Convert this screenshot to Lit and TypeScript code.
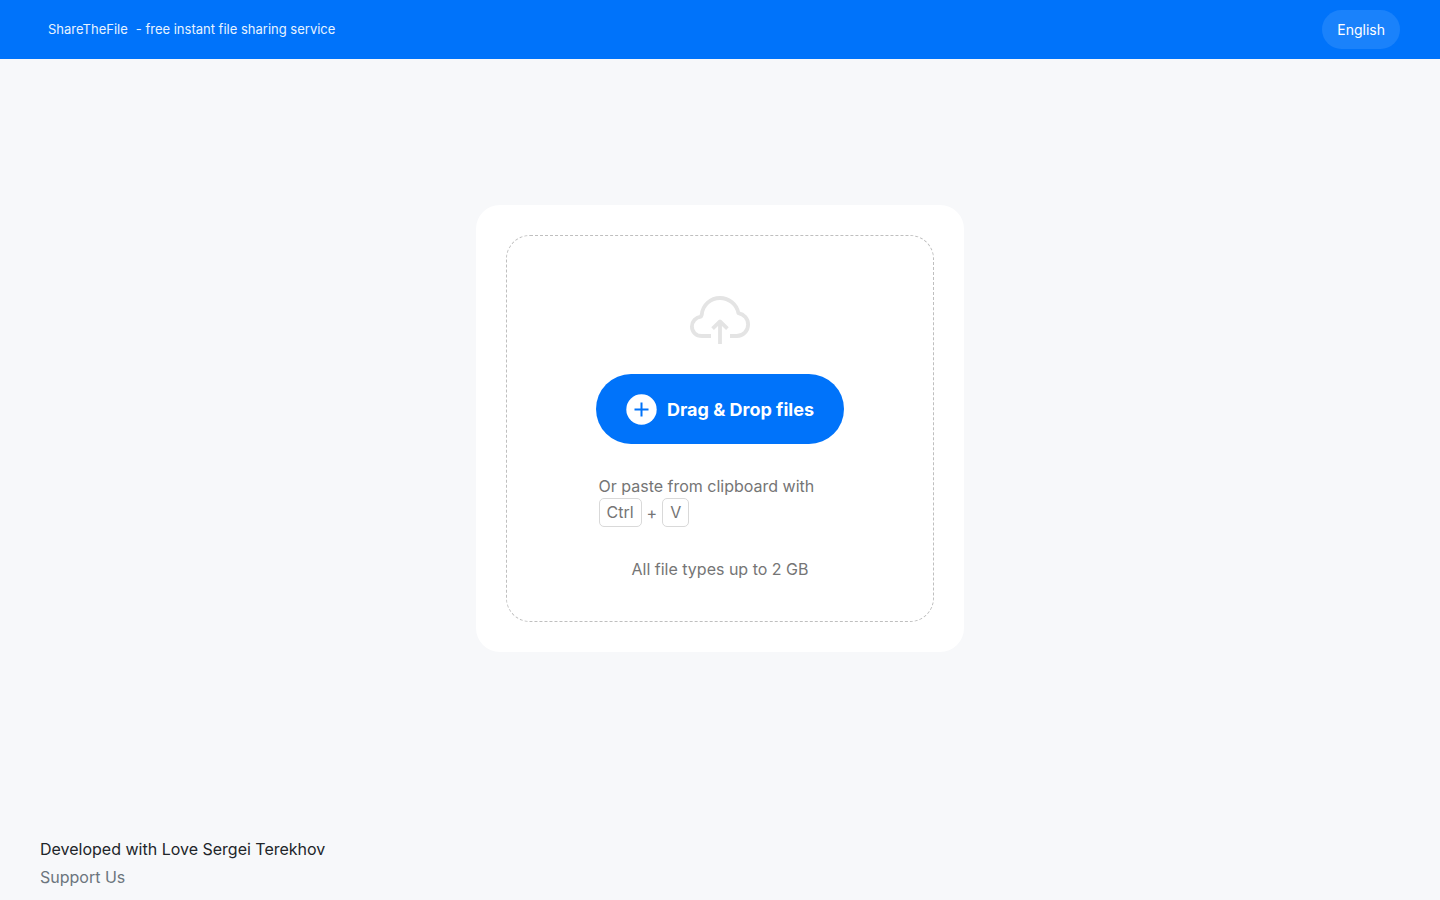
import { LitElement, html, css } from "lit";
import { customElement } from "lit/decorators.js";

@customElement("app-root")
export class AppRoot extends LitElement {
  static styles = css`
    :host {
      display: flex;
      flex-direction: column;
      min-height: 100vh;
      background: #f7f8fa;
      color: #212529;
      font-family: Inter, "Liberation Sans", sans-serif;
      font-size: 16px;
      line-height: 24px;
    }
    .header {
      display: flex;
      align-items: center;
      justify-content: space-between;
      padding: 10px 40px;
      background: #0073fa;
    }
    .brand {
      display: flex;
      gap: 8px;
      margin: 0;
      padding: 0 8px;
      color: #e6f2ff;
      font-size: 13px;
      line-height: 21px;
    }
    .brand a {
      color: inherit;
      text-decoration: none;
    }
    .language {
      padding: 9px 15px;
      border: 0;
      border-radius: 20px;
      background: #1a82fb;
      color: #fff;
      font: 400 14px/21px Inter, "Liberation Sans", sans-serif;
      cursor: pointer;
    }
    .main {
      flex: 1;
      display: flex;
      align-items: center;
      justify-content: center;
      padding: 30px;
    }
    .card {
      box-sizing: border-box;
      width: 100%;
      max-width: 488px;
      padding: 30px;
      border-radius: 24px;
      background: #fff;
    }
    .dropzone {
      display: flex;
      flex-direction: column;
      align-items: center;
      gap: 30px;
      padding: 60px 30px 40px;
      border: 1px dashed #bfbfbf;
      border-radius: 24px;
      color: #757575;
    }
    .cloud {
      display: block;
      width: 60px;
      height: 48px;
    }
    .upload {
      display: flex;
      align-items: center;
      gap: 10px;
      height: 70px;
      padding: 0 30px;
      border: 0;
      border-radius: 35px;
      background: #0073fa;
      color: #fff;
      font: 700 18px/27px Inter, "Liberation Sans", sans-serif;
      cursor: pointer;
    }
    .plus {
      width: 31px;
      height: 31px;
    }
    .hint {
      width: 100%;
      max-width: 243px;
    }
    .hint-row {
      display: flex;
      align-items: center;
      gap: 5px;
    }
    .key {
      padding: 1px 7px;
      border: 1px solid #d9d9d9;
      border-radius: 5px;
      font: inherit;
      line-height: 25px;
    }
    .limit {
      margin: 0;
    }
    .footer {
      padding: 37px 40px 9px;
      line-height: 28px;
    }
    .footer p {
      margin: 0;
    }
    .support {
      color: #6c757d;
      text-decoration: none;
    }
  `;

  render() {
    return html`
      <header class="header">
        <p class="brand">
          <a href="#">ShareTheFile</a>
          <span>- free instant file sharing service</span>
        </p>
        <button class="language" type="button">English</button>
      </header>
      <main class="main">
        <section class="card">
          <div class="dropzone">
            <svg
              class="cloud"
              viewBox="0 0 60 48"
              fill="none"
              stroke="#e4e4e4"
              stroke-width="3.8"
              stroke-linejoin="round"
              aria-hidden="true"
            >
              <path
                d="M21 40H12C6 40 1.9 35.9 1.9 30.5C1.9 25.4 5.8 21.2 11 20.7L11.8 18.5C12.8 9 20.5 2 30 2C39 2 46.8 8.4 48.4 17.2C54 18.2 58.1 22.8 58.1 28.4C58.1 34.8 53.2 40 46.8 40H40"
              />
              <path d="M30 48V26M22.6 32.6L30 25.4L37.4 32.6" />
            </svg>
            <button class="upload" type="button">
              <svg class="plus" viewBox="0 0 31 31" aria-hidden="true">
                <circle cx="15.5" cy="15.5" r="15.2" fill="#fff" />
                <path d="M15.5 8.5V22.5M8.5 15.5H22.5" stroke="#0073fa" stroke-width="2" />
              </svg>
              <span>Drag &amp; Drop files</span>
            </button>
            <div class="hint">
              <span>Or paste from clipboard with</span>
              <div class="hint-row"><kbd class="key">Ctrl</kbd><span>+</span><kbd class="key">V</kbd></div>
            </div>
            <p class="limit">All file types up to 2 GB</p>
          </div>
        </section>
      </main>
      <footer class="footer">
        <p>Developed with Love Sergei Terekhov</p>
        <p><a class="support" href="#">Support Us</a></p>
      </footer>
    `;
  }
}
